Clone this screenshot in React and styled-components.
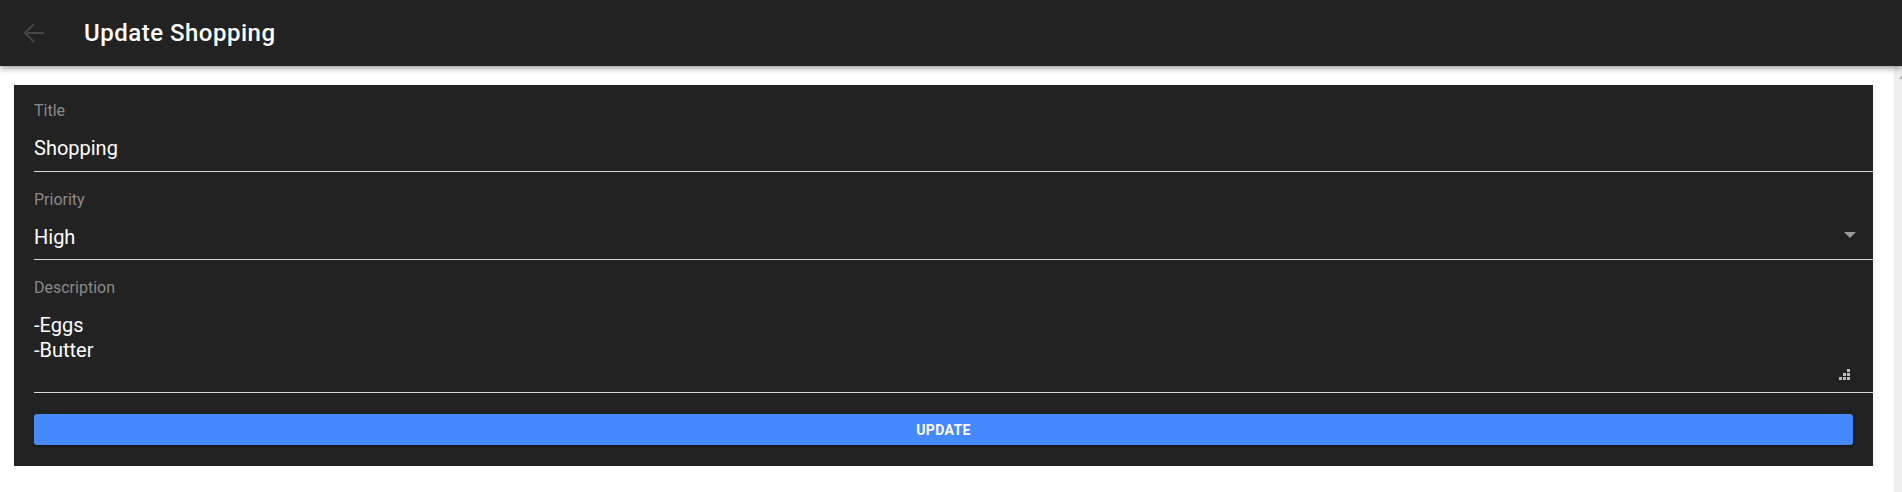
import React from "react";
import styled, { createGlobalStyle } from "styled-components";

const Global = createGlobalStyle`
  html, body { margin: 0; padding: 0; height: 100%; overflow: hidden; background: #fff; }
  body { font-family: Roboto, "Liberation Sans", Arial, sans-serif; }
  #root { height: 100%; }
  * { box-sizing: border-box; }
`;

const Page = styled.div`
  height: 100%;
  display: flex;
  flex-direction: column;
`;

const Header = styled.header`
  position: relative;
  z-index: 2;
  flex: 0 0 66px;
  height: 66px;
  background: #222;
  display: flex;
  align-items: center;
  padding-left: 22px;
  box-shadow: 0 2px 4px -1px rgba(0,0,0,0.2), 0 4px 5px 0 rgba(0,0,0,0.14), 0 1px 10px 0 rgba(0,0,0,0.12);
`;

const BackButton = styled.button`
  width: 24px;
  height: 24px;
  padding: 0;
  margin: 0 38px 0 0;
  border: none;
  background: transparent;
  color: #464646;
  display: flex;
  align-items: center;
  justify-content: center;
`;

const Title = styled.h1`
  margin: 0;
  font-size: 24px;
  font-weight: 500;
  color: #fff;
  letter-spacing: 0.5px;
`;

const Body = styled.div`
  flex: 1;
  min-height: 0;
  display: flex;
`;

const Content = styled.main`
  flex: 1;
  min-width: 0;
  overflow: hidden;
  padding: 19px 21px 24px 14px;
`;

const ScrollTrack = styled.div`
  flex: 0 0 8px;
  background: #efefef;
  display: flex;
  flex-direction: column;
  padding-top: 8px;
`;

const Card = styled.form`
  background: #222;
  padding: 16px 20px 21px 20px;
  display: flex;
  flex-direction: column;
`;

const Field = styled.div`
  position: relative;
  margin-right: -20px;
  padding-right: 20px;
  margin-top: ${(p) => p.$gap || 0}px;
  padding-bottom: ${(p) => p.$pb || 10}px;
  border-bottom: 1px solid #d8d8d8;
  display: flex;
  flex-direction: column;
`;

const Label = styled.label`
  font-size: 16px;
  line-height: 19px;
  color: #8a8a8a;
  margin-bottom: 16px;
`;

const TextInput = styled.input`
  width: 100%;
  height: 25px;
  padding: 0;
  margin: 0;
  border: none;
  outline: none;
  background: transparent;
  color: #fff;
  font: 400 20px/25px Roboto, "Liberation Sans", Arial, sans-serif;
`;

const SelectValue = styled.div`
  height: 25px;
  font: 400 20px/25px Roboto, "Liberation Sans", Arial, sans-serif;
  color: #fff;
`;

const DropIcon = styled.svg`
  position: absolute;
  right: 17px;
  bottom: 21px;
  width: 12px;
  height: 6px;
  color: #9a9a9a;
`;

const TextArea = styled.textarea`
  width: 100%;
  height: 70px;
  padding: 0;
  margin: 0;
  border: none;
  outline: none;
  background: transparent;
  color: #fff;
  resize: none;
  font: 400 20px/25px Roboto, "Liberation Sans", Arial, sans-serif;
`;

const Resizer = styled.svg`
  position: absolute;
  right: 23px;
  bottom: 12px;
  width: 11px;
  height: 11px;
  color: #bdbdbd;
  pointer-events: none;
`;

const SubmitButton = styled.button`
  margin-top: 21px;
  height: 31px;
  border: none;
  border-radius: 3px;
  background: #4589ff;
  color: #fff;
  font: 700 14px/1 Roboto, "Liberation Sans", Arial, sans-serif;
  letter-spacing: 0.4px;
  text-transform: uppercase;
  box-shadow: 0 3px 1px -2px rgba(0,0,0,0.2), 0 2px 2px 0 rgba(0,0,0,0.14), 0 1px 5px 0 rgba(0,0,0,0.12);
  cursor: pointer;
`;

export default function App() {
  return (
    <Page>
      <Global />
      <Header>
        <BackButton type="button" aria-label="back">
          <svg width="22" height="20" viewBox="0 0 22 20" fill="none" stroke="currentColor" strokeWidth="2">
            <path d="M21 10H2" />
            <path d="M11 1L2 10l9 9" />
          </svg>
        </BackButton>
        <Title>Update Shopping</Title>
      </Header>
      <Body>
        <Content>
          <Card onSubmit={(e) => e.preventDefault()}>
            <Field>
              <Label>Title</Label>
              <TextInput defaultValue="Shopping" />
            </Field>
            <Field $gap={18} $pb={9}>
              <Label>Priority</Label>
              <SelectValue>High</SelectValue>
              <DropIcon viewBox="0 0 12 6">
                <path d="M0 0h12L6 6z" fill="currentColor" />
              </DropIcon>
            </Field>
            <Field $gap={18} $pb={9}>
              <Label>Description</Label>
              <TextArea defaultValue={"-Eggs\n-Butter"} />
              <Resizer viewBox="0 0 11 11">
                <g fill="currentColor">
                  <rect x="8" y="0" width="3" height="3" />
                  <rect x="4" y="4" width="3" height="3" />
                  <rect x="8" y="4" width="3" height="3" />
                  <rect x="0" y="8" width="3" height="3" />
                  <rect x="4" y="8" width="3" height="3" />
                  <rect x="8" y="8" width="3" height="3" />
                </g>
              </Resizer>
            </Field>
            <SubmitButton type="submit">Update</SubmitButton>
          </Card>
        </Content>
        <ScrollTrack>
          <svg width="8" height="6" viewBox="0 0 8 6">
            <path d="M5 5L8 1.5V5z" fill="#a3a3a3" />
          </svg>
        </ScrollTrack>
      </Body>
    </Page>
  );
}
